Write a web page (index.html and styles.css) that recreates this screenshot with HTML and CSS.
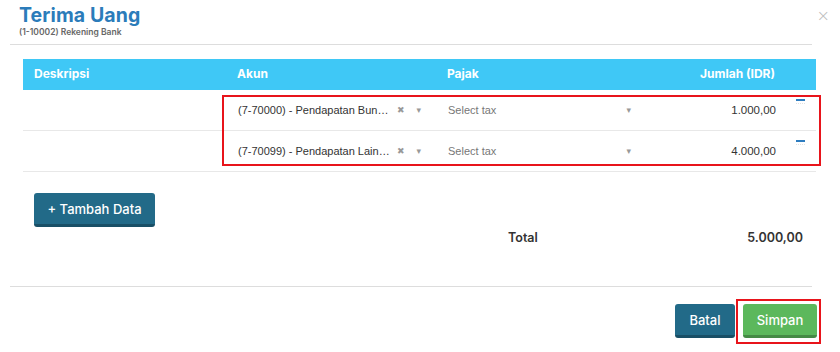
FILE: index.html
```html
<!DOCTYPE html>
<html lang="id">
<head>
  <meta charset="UTF-8" />
  <title>Terima Uang</title>
  <link rel="stylesheet" href="styles.css">
</head>
<body>
  <div class="modal">
    <button class="close-btn">&times;</button>
    <div class="modal-header">
      <h2 class="title">Terima Uang</h2>
      <div class="subtitle">(1-10002) Rekening Bank</div>
    </div>

    <div class="modal-body">
      <div class="grid-table">
        <div class="row head">
          <div class="cell">Deskripsi</div>
          <div class="cell">Akun</div>
          <div class="cell">Pajak</div>
          <div class="cell num">Jumlah (IDR)</div>
          <div class="cell"></div>
        </div>
        <div class="rows">
          <div class="row">
            <div class="cell"></div>
            <div class="cell select">
              <span class="value">(7-70000) - Pendapatan Bun…</span>
              <span class="clear">&#10006;</span>
              <span class="caret">&#9662;</span>
            </div>
            <div class="cell select">
              <span class="placeholder">Select tax</span>
              <span class="caret">&#9662;</span>
            </div>
            <div class="cell num amount">1.000,00</div>
            <div class="cell action"><span class="minus"></span><span class="dots"></span></div>
          </div>
          <div class="row">
            <div class="cell"></div>
            <div class="cell select">
              <span class="value">(7-70099) - Pendapatan Lain…</span>
              <span class="clear">&#10006;</span>
              <span class="caret">&#9662;</span>
            </div>
            <div class="cell select">
              <span class="placeholder">Select tax</span>
              <span class="caret">&#9662;</span>
            </div>
            <div class="cell num amount">4.000,00</div>
            <div class="cell action"><span class="minus"></span><span class="dots"></span></div>
          </div>
          <div class="mark"></div>
        </div>
      </div>

      <button class="btn btn-dark add-btn">+ Tambah Data</button>

      <div class="total-row">
        <span class="total-label">Total</span>
        <span class="total-value">5.000,00</span>
      </div>
    </div>

    <div class="modal-footer">
      <div class="footer-actions">
        <button class="btn btn-dark batal">Batal</button>
        <span class="mark-box"><button class="btn btn-green simpan">Simpan</button></span>
      </div>
    </div>
  </div>
</body>
</html>
```

FILE: styles.css
```css
body {
  margin: 0;
  background: #fff;
  font-family: 'Inter', 'Lato', sans-serif;
  color: #333;
}

.modal {
  position: relative;
  width: 840px;
  height: 352px;
  background: #fff;
}

.close-btn {
  position: absolute;
  top: 6px;
  right: 10px;
  border: none;
  background: transparent;
  color: #bbb;
  font-size: 16px;
  padding: 0;
  font-family: 'DejaVu Sans', sans-serif;
  font-weight: 300;
}

.modal-header {
  margin: 0 28px 0 10px;
  padding: 4px 9px 0;
  height: 40px;
  border-bottom: 1px solid #ddd;
}

.title {
  margin: 0;
  font-size: 19.5px;
  line-height: 23px;
  font-weight: 700;
  color: #2b7cba;
  letter-spacing: 0.1px;
}

.subtitle {
  font-size: 8.5px;
  font-weight: 600;
  color: #666;
  line-height: 10px;
}

.modal-body {
  padding: 14px 0 0 23px;
  height: 227px;
}

.grid-table {
  width: 793px;
}

.row {
  display: grid;
  grid-template-columns: 199px 210px 210px 148px 26px;
  height: 41px;
  border-bottom: 1px solid #e8e8e8;
  box-sizing: border-box;
}

.row.head {
  height: 31px;
  background: #3fc8f6;
  border-bottom: none;
  color: #fff;
  font-weight: 700;
  font-size: 12px;
}

.row.head .cell {
  display: flex;
  align-items: center;
  padding: 0 11px 3px 15px;
}

.row.head .cell:first-child {
  padding-left: 11px;
}

.row.head .num {
  justify-content: flex-end;
  padding-right: 15px;
}

.rows {
  position: relative;
}

.select {
  display: flex;
  align-items: center;
  padding: 0 10px 0 16px;
  font-family: 'Liberation Sans', Arial, sans-serif;
  font-size: 11px;
}

.select .value {
  color: #333;
  flex: 1;
  white-space: nowrap;
}

.select .placeholder {
  color: #777;
  flex: 1;
}

.select .clear {
  color: #999;
  font-size: 9px;
  margin-right: 12px;
  font-family: 'DejaVu Sans', sans-serif;
}

.select .caret {
  color: #999;
  font-size: 9px;
  margin-right: 1px;
  font-family: 'DejaVu Sans', sans-serif;
}

.cell.num.amount {
  display: flex;
  align-items: center;
  justify-content: flex-end;
  padding-right: 14px;
  font-family: 'Liberation Sans', Arial, sans-serif;
  font-size: 11.5px;
  color: #333;
}

.action {
  padding-top: 9px;
  padding-left: 6px;
}

.minus {
  display: block;
  width: 9px;
  height: 2px;
  background: #2e7dc0;
}

.dots {
  display: block;
  width: 9px;
  margin-top: 2px;
  border-top: 1px dotted #e2e2e2;
}

.mark {
  position: absolute;
  left: 199px;
  top: 5px;
  width: 599px;
  height: 71px;
  border: 2px solid #e8141b;
  box-sizing: border-box;
  pointer-events: none;
}

.btn {
  border: none;
  border-bottom: 3px solid rgba(0, 0, 0, 0.25);
  border-radius: 3px;
  color: #fff;
  font-family: 'Inter', 'Lato', sans-serif;
  font-size: 13px;
  font-weight: 500;
  padding: 0;
  height: 34px;
  white-space: nowrap;
}

.btn-dark {
  background: #226a88;
}

.btn-green {
  background: #5cb85c;
}

.add-btn {
  display: block;
  margin: 21px 0 0 11px;
  width: 121px;
}

.total-row {
  display: flex;
  align-items: center;
  margin-top: 3px;
  padding-left: 485px;
  width: 295px;
  justify-content: space-between;
  font-size: 12.5px;
  font-weight: 600;
  color: #333;
}

.modal-footer {
  margin: 0 28px 0 10px;
  border-top: 1px solid #ddd;
  padding-top: 12px;
}

.footer-actions {
  display: flex;
  justify-content: flex-end;
  align-items: flex-start;
  gap: 1px;
  margin-right: -9px;
}

.batal {
  width: 60px;
  margin-top: 5px;
}

.mark-box {
  display: block;
  border: 2px solid #e8141b;
  padding: 3px 2px 4px 5px;
}

.simpan {
  display: block;
  width: 74px;
}
```
